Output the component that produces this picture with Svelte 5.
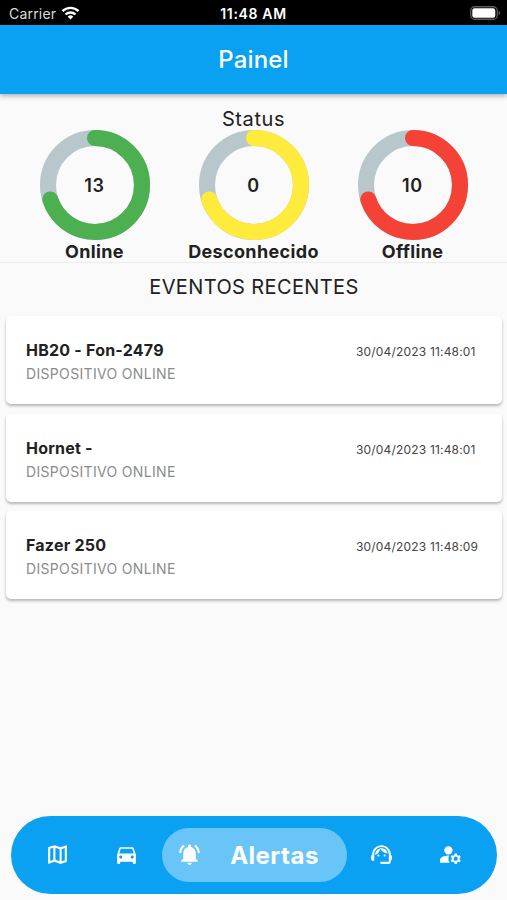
<script lang="ts">
	const statuses = [
		{ label: 'Online', count: 13, color: '#4caf50' },
		{ label: 'Desconhecido', count: 0, color: '#ffeb3b' },
		{ label: 'Offline', count: 10, color: '#f44336' }
	];

	const events = [
		{ device: 'HB20 - Fon-2479', type: 'DISPOSITIVO ONLINE', time: '30/04/2023 11:48:01' },
		{ device: 'Hornet -', type: 'DISPOSITIVO ONLINE', time: '30/04/2023 11:48:01' },
		{ device: 'Fazer 250', type: 'DISPOSITIVO ONLINE', time: '30/04/2023 11:48:09' }
	];

	const tabs = [
		{
			id: 'map',
			label: 'Mapa',
			path: 'M20.5 3l-.16.03L15 5.1 9 3 3.36 4.9c-.21.07-.36.25-.36.48V20.5c0 .28.22.5.5.5l.16-.03L9 18.9l6 2.1 5.64-1.9c.21-.07.36-.25.36-.48V3.5c0-.28-.22-.5-.5-.5zM10 5.47l4 1.4v11.66l-4-1.4V5.47zm-5 .99l3-1.01v11.7l-3 1.16V6.46zm14 11.08l-3 1.01V6.86l3-1.16v11.84z'
		},
		{
			id: 'car',
			label: 'Veículos',
			path: 'M18.92 6.01C18.72 5.42 18.16 5 17.5 5h-11c-.66 0-1.21.42-1.42 1.01L3 12v8c0 .55.45 1 1 1h1c.55 0 1-.45 1-1v-1h12v1c0 .55.45 1 1 1h1c.55 0 1-.45 1-1v-8l-2.08-5.99zM6.5 16c-.83 0-1.5-.67-1.5-1.5S5.67 13 6.5 13s1.5.67 1.5 1.5S7.33 16 6.5 16zm11 0c-.83 0-1.5-.67-1.5-1.5s.67-1.5 1.5-1.5 1.5.67 1.5 1.5-.67 1.5-1.5 1.5zM5 11l1.5-4.5h11L19 11H5z'
		},
		{
			id: 'alerts',
			label: 'Alertas',
			path: 'M7.58 4.08L6.15 2.65C3.75 4.48 2.17 7.3 2.03 10.5h2c.15-2.65 1.51-4.97 3.55-6.42zm12.39 6.42h2c-.15-3.2-1.73-6.02-4.12-7.85l-1.42 1.43c2.02 1.45 3.39 3.77 3.54 6.42zM18 11c0-3.07-1.64-5.64-4.5-6.32V4c0-.83-.67-1.5-1.5-1.5s-1.5.67-1.5 1.5v.68C7.63 5.36 6 7.92 6 11v5l-2 2v1h16v-1l-2-2v-5zm-6 11c.14 0 .27-.01.4-.04.65-.14 1.18-.58 1.44-1.18.1-.24.15-.5.15-.78h-4c.01 1.1.9 2 2.01 2z'
		},
		{
			id: 'support',
			label: 'Suporte',
			path: 'M21 12.22C21 6.73 16.74 3 12 3c-4.69 0-9 3.65-9 9.28-.6.34-1 .98-1 1.72v2c0 1.1.9 2 2 2h1v-6.1c0-3.87 3.13-7 7-7s7 3.13 7 7V19h-8v2h8c1.1 0 2-.9 2-2v-1.22c.59-.31 1-.92 1-1.64v-2.3c0-.7-.41-1.31-1-1.62zM8 13a1 1 0 1 0 2 0a1 1 0 1 0-2 0zM14 13a1 1 0 1 0 2 0a1 1 0 1 0-2 0zM18 11.03C17.52 8.18 15.04 6 12.05 6c-3.03 0-6.29 2.51-6.03 6.45 2.47-1.01 4.33-3.21 4.86-5.89 1.31 2.63 4 4.44 7.12 4.47z'
		},
		{
			id: 'account',
			label: 'Conta',
			path: 'M6 8a4 4 0 1 0 8 0a4 4 0 1 0-8 0zM10.67 13.02C10.45 13.01 10.23 13 10 13c-2.42 0-4.68.67-6.61 1.82C2.51 15.34 2 16.32 2 17.35V20h9.26C10.47 18.87 10 17.49 10 16c0-1.07.25-2.07.67-2.98zM20.75 16c0-.22-.03-.42-.06-.63l1.14-1.01-1-1.73-1.45.49c-.32-.27-.68-.48-1.08-.63L18 11h-2l-.3 1.49c-.4.15-.76.36-1.08.63l-1.45-.49-1 1.73 1.14 1.01c-.03.21-.06.41-.06.63s.03.42.06.63l-1.14 1.01 1 1.73 1.45-.49c.32.27.68.48 1.08.63L16 21h2l.3-1.49c.4-.15.76-.36 1.08-.63l1.45.49 1-1.73-1.14-1.01c.03-.21.06-.41.06-.63zM17 18c-1.1 0-2-.9-2-2s.9-2 2-2 2 .9 2 2-.9 2-2 2z'
		}
	];

	let activeTab = $state('alerts');
</script>

<div class="screen">
	<div class="status-bar">
		<div class="carrier">
			<span>Carrier</span>
			<svg class="wifi" viewBox="0 0 18 14" fill="none" stroke="#fff" stroke-width="2.4">
				<path d="M1 5.2a11.4 11.4 0 0 1 16 0" />
				<path d="M4 8.5a7.1 7.1 0 0 1 10 0" />
				<path d="M9 13.5L6.2 10.7a4 4 0 0 1 5.6 0z" fill="#fff" stroke="none" />
			</svg>
		</div>
		<div class="clock">11:48 AM</div>
		<svg class="battery" viewBox="0 0 31 14">
			<rect x="0.75" y="0.75" width="26.5" height="12.5" rx="3.8" fill="none" stroke="#5c5c5c" stroke-width="1.3" />
			<rect x="2.3" y="2.3" width="23" height="9.4" rx="2.2" fill="#fff" />
			<path d="M28.6 4.8c1 .4 1.6 1.2 1.6 2.2s-.6 1.8-1.6 2.2z" fill="#5c5c5c" />
		</svg>
	</div>

	<header class="app-bar">Painel</header>

	<section class="summary">
		<h2>Status</h2>
		<div class="rings">
			{#each statuses as status}
				<div class="ring-item">
					<div class="ring">
						<svg viewBox="0 0 110 110" fill="none" stroke-width="16">
							<circle cx="55" cy="55" r="47" stroke="#b8c7cc" />
							<circle
								cx="55"
								cy="55"
								r="47"
								stroke={status.color}
								stroke-linecap="round"
								pathLength="100"
								stroke-dasharray="70 100"
								transform="rotate(-90 55 55)"
							/>
						</svg>
						<span class="count">{status.count}</span>
					</div>
					<div class="ring-label">{status.label}</div>
				</div>
			{/each}
		</div>
	</section>

	<main class="events">
		<h2>EVENTOS RECENTES</h2>
		{#each events as event}
			<article class="card">
				<div>
					<div class="device">{event.device}</div>
					<div class="type">{event.type}</div>
				</div>
				<time>{event.time}</time>
			</article>
		{/each}
	</main>

	<nav class="tab-bar">
		{#each tabs as tab}
			<button
				class="tab"
				class:active={activeTab === tab.id}
				onclick={() => (activeTab = tab.id)}
				aria-label={tab.label}
			>
				<svg viewBox="0 0 24 24" fill="#fff"><path d={tab.path} /></svg>
				{#if activeTab === tab.id}
					<span>{tab.label}</span>
				{/if}
			</button>
		{/each}
	</nav>
</div>

<style>
	:global(body) {
		background: #fafafa;
	}

	.screen {
		display: flex;
		flex-direction: column;
		width: 507px;
		height: 900px;
		overflow: hidden;
		background: #fafafa;
		color: #212121;
		font-family: Inter, 'Liberation Sans', sans-serif;
	}

	.status-bar {
		display: grid;
		grid-template-columns: 1fr auto 1fr;
		align-items: center;
		height: 25px;
		padding: 2px 6px 0 9px;
		box-sizing: border-box;
		background: #000;
		color: #fff;
		font-size: 14px;
	}

	.carrier {
		display: flex;
		align-items: center;
		gap: 5px;
		color: #dcdcdc;
		letter-spacing: 0.2px;
	}

	.wifi {
		width: 19px;
		height: 14px;
		margin-top: -2px;
	}

	.clock {
		margin-right: 3px;
		font-weight: 600;
		letter-spacing: 0.65px;
	}

	.battery {
		width: 31px;
		height: 14px;
		margin-top: -1px;
		justify-self: end;
	}

	.app-bar {
		display: flex;
		align-items: center;
		justify-content: center;
		height: 69px;
		background: #0aa1f2;
		color: #fff;
		font-size: 24px;
		font-weight: 500;
		letter-spacing: 0.15px;
		box-shadow: 0 2px 5px rgba(0, 0, 0, 0.3);
	}

	h2 {
		margin: 0;
		font-size: 20px;
		font-weight: 400;
		line-height: 24px;
		text-align: center;
	}

	.summary {
		height: 169px;
		padding-top: 13px;
		box-sizing: border-box;
		border-bottom: 1px solid #ececec;
	}

	.summary h2 {
		margin-bottom: -1px;
		letter-spacing: 0.6px;
	}

	.rings {
		display: grid;
		grid-template-columns: repeat(3, 159px);
		justify-content: center;
	}

	.ring-item {
		display: flex;
		flex-direction: column;
		align-items: center;
	}

	.ring {
		display: grid;
		place-items: center;
		width: 110px;
		height: 110px;
	}

	.ring svg,
	.count {
		grid-area: 1 / 1;
	}

	.count {
		font-size: 18px;
		font-weight: 600;
		letter-spacing: 0.7px;
	}

	.ring-label {
		font-size: 18px;
		font-weight: 650;
		line-height: 23px;
		letter-spacing: 0.35px;
	}

	.events {
		display: flex;
		flex-direction: column;
		flex: 1;
		gap: 9.7px;
		padding: 12px 5px 0 6px;
	}

	.events h2 {
		margin-bottom: 7.3px;
		letter-spacing: 0.38px;
	}

	.card {
		display: flex;
		justify-content: space-between;
		height: 88px;
		padding: 22px 24px 0 20px;
		box-sizing: border-box;
		border-radius: 5px;
		background: #fff;
		box-shadow: 0 2px 3px rgba(0, 0, 0, 0.28);
	}

	.device {
		font-size: 16px;
		font-weight: 650;
		line-height: 24px;
		letter-spacing: 0.22px;
	}

	.type {
		color: #8c8c8c;
		font-size: 14px;
		line-height: 24px;
		letter-spacing: 0.33px;
	}

	time {
		width: 122px;
		color: #444;
		font-size: 12px;
		line-height: 27px;
		letter-spacing: 0.18px;
		white-space: nowrap;
	}

	.tab-bar {
		display: flex;
		align-items: center;
		height: 78px;
		margin: 0 10px 6px 11px;
		padding: 0 12px;
		box-sizing: border-box;
		border-radius: 39px;
		background: #0aa1f2;
	}

	.tab {
		display: flex;
		flex: 1;
		align-items: center;
		justify-content: center;
		padding: 0;
		border: none;
		background: none;
		color: #fff;
		font-family: inherit;
		cursor: pointer;
	}

	.tab svg {
		width: 25px;
		height: 25px;
		margin-bottom: 1px;
	}

	.tab.active {
		flex: none;
		width: 185px;
		height: 54px;
		padding-left: 15px;
		border-radius: 27px;
		background: #69c5f7;
		font-size: 24px;
		font-weight: 700;
		letter-spacing: 0.5px;
	}

	.tab.active span {
		flex: 1;
		padding-left: 1px;
		text-align: center;
	}
</style>
